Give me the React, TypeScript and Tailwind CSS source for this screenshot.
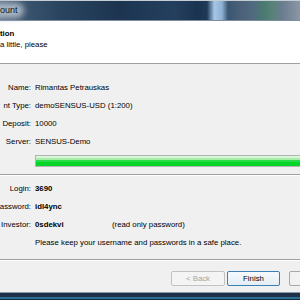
const labelCls = "flex w-[31px] shrink-0 justify-end whitespace-nowrap";

function Row({ label, children }: { label: string; children: React.ReactNode }) {
  return (
    <div className="flex h-[18px] items-center gap-[4px]">
      <div className={labelCls}>{label}</div>
      <div className="flex items-center whitespace-nowrap">{children}</div>
    </div>
  );
}

export default function App() {
  return (
    <div className="flex h-[300px] w-[300px] flex-col overflow-hidden bg-[#f0f0f0] text-[7.8px] text-black [font-family:'Liberation_Sans',Arial,sans-serif]">
      {/* title bar */}
      <div className="relative h-[21px] shrink-0 border-t border-b border-t-[#c4ccd4] border-b-[#7e8ea0] bg-[linear-gradient(to_right,#5a6e84_0%,#3c546e_8%,#2a4460_20%,#1c3450_40%,#24405e_58%,#1b3350_66%,#1e3a58_69%,#a6c6e6_71.5%,#8eb0d2_74%,#3a5672_76%,#4a6078_80%,#506a80_84%,#4a7a70_88%,#5a8278_91%,#6a7c90_94%,#8c96a6_100%)]">
        <div className="absolute left-[-14px] top-[2px] h-[15px] w-[38px] rounded-full bg-[#a9b6c4] blur-[3px]" />
        <span className="absolute left-0 top-[3px] text-[9px] leading-[12px] text-[#111]">ount</span>
      </div>

      {/* header */}
      <div className="flex h-[43px] shrink-0 flex-col border-b border-[#a0a0a0] bg-white pt-[7px]">
        <div className="h-[11px] font-bold leading-[11px]">tion</div>
        <div className="h-[11px] leading-[11px]">a little, please</div>
      </div>

      {/* body */}
      <div className="flex flex-1 flex-col pt-[15px]">
        <Row label="Name:">Rimantas Petrauskas</Row>
        <Row label="nt Type:">demoSENSUS-USD (1:200)</Row>
        <Row label="Deposit:">10000</Row>
        <Row label="Server:">SENSUS-Demo</Row>

        <div className="ml-[35px] mt-[4px] h-[12px] border border-r-0 border-[#b4b4b4] bg-[linear-gradient(to_bottom,#d6f8d6_0%,#d6f8d6_20%,#a8eeaa_20%,#a8eeaa_40%,#28dc48_40%,#28dc48_60%,#06d428_60%,#06d428_100%)]" />

        <div className="mt-[7px] h-[2px] border-t border-b border-t-[#a0a0a0] border-b-white" />

        <div className="mt-[4px]">
          <Row label="Login:">
            <span className="font-bold">3690</span>
          </Row>
          <Row label="Password:">
            <span className="font-bold">idl4ync</span>
          </Row>
          <Row label="Investor:">
            <span className="w-[77px] font-bold">0sdekvi</span>
            <span>(read only password)</span>
          </Row>
          <Row label="">Please keep your username and passwords in a safe place.</Row>
        </div>

        <div className="mt-[7px] h-[2px] border-t border-b border-t-[#a0a0a0] border-b-white" />

        <div className="mt-[10px] flex h-[15px] items-center">
          <div className="ml-[171px] flex h-[15px] w-[54px] shrink-0 items-center justify-center rounded-[2px] border border-[#c2c2c2] bg-[#f4f4f4] text-[#a4a4a4]">
            &lt; Back
          </div>
          <div className="ml-[2px] flex h-[15px] w-[53px] shrink-0 items-center justify-center rounded-[2px] border border-[#3c7fb1] bg-[linear-gradient(to_bottom,#f6fafd,#e4eef6)]">
            Finish
          </div>
          <div className="ml-[9px] h-[15px] w-[20px] shrink-0 rounded-[2px] border border-[#a8a8a8] bg-[#f2f2f2]" />
        </div>
      </div>

      {/* bottom frame */}
      <div className="h-[8px] shrink-0 border-t border-[#8a9aa8] bg-[linear-gradient(to_bottom,#1e3048_0%,#1e3048_55%,#2a7090_55%,#2a7090_80%,#16283c_80%)]" />
    </div>
  );
}
